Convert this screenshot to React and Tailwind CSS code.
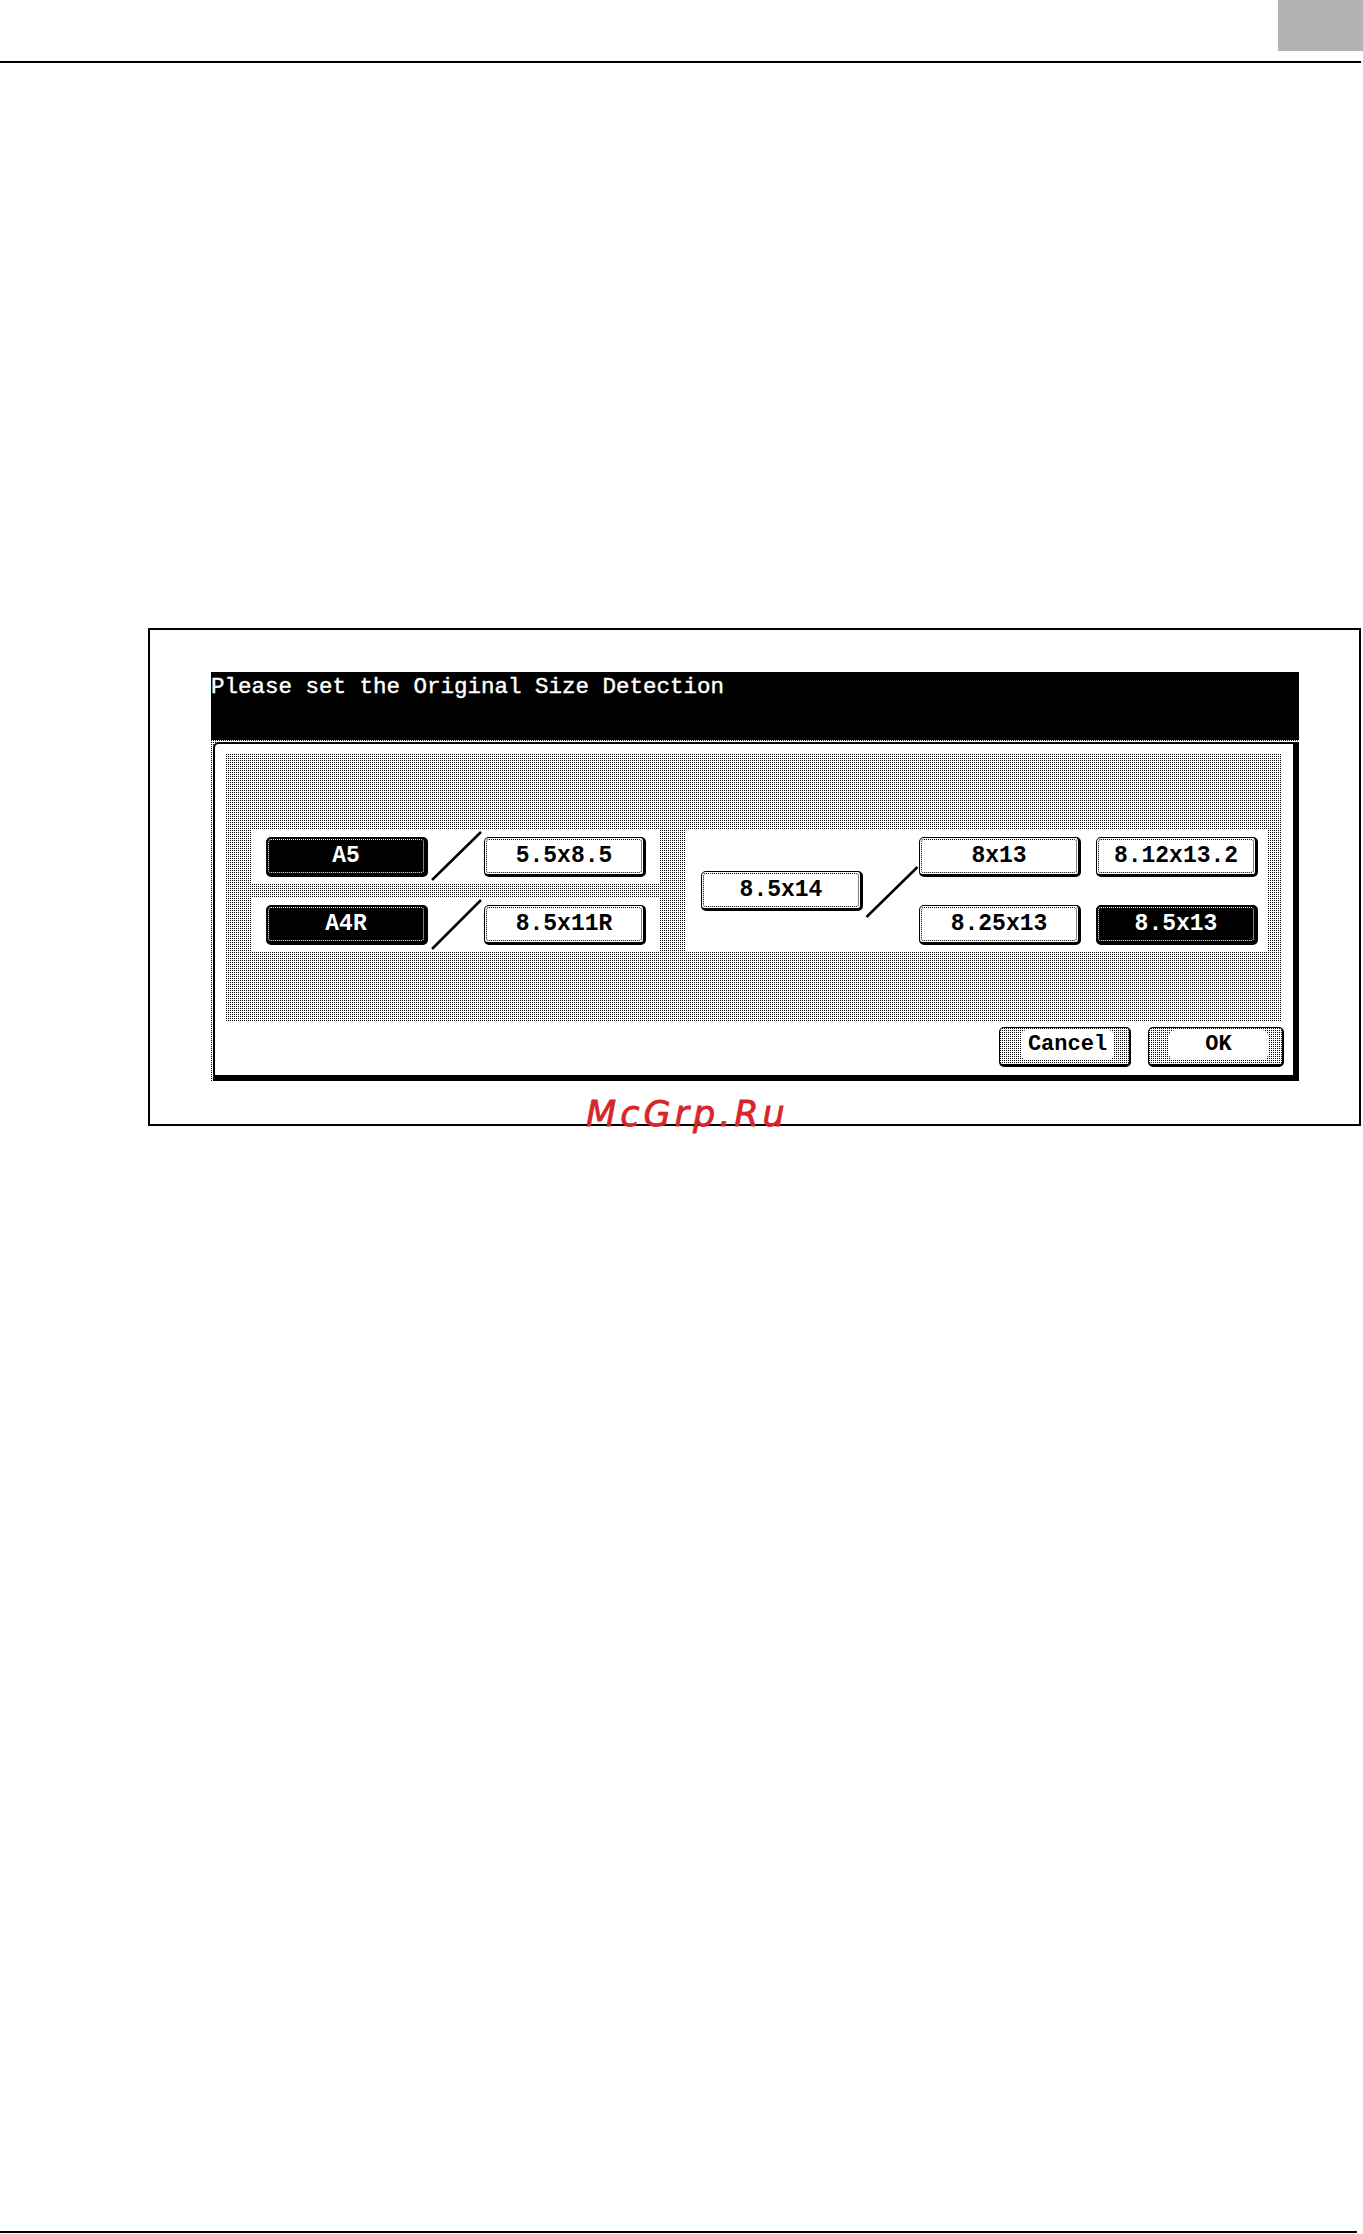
// Copier panel: original size detection dialog
const mono = "font-['Liberation_Mono','DejaVu_Sans_Mono',monospace]";
// stipple: one dark pixel in every 2x2 cell
const dots =
  'bg-[linear-gradient(90deg,transparent_1px,#fff_1px),linear-gradient(#000_1px,#fff_1px)] bg-[length:2px_2px]';

const Key = ({ label, dark = false }) => (
  <div
    className={`w-[162px] h-[40px] shrink-0 rounded-[5px] border border-black border-r-[3px] border-b-[3px] p-[1px] ${
      dark ? 'bg-black' : 'bg-white'
    }`}
  >
    <div
      className={`h-full rounded-[3px] border border-dotted flex items-center justify-center ${mono} font-bold text-[23px] leading-none ${
        dark ? 'bg-black border-white text-white' : 'bg-white border-black text-black'
      }`}
    >
      {label}
    </div>
  </div>
);

// big confirm buttons with the stippled frame round a white face
const ActionKey = ({ label, className }) => (
  <div
    className={`h-[40px] rounded-[5px] border border-black border-r-[2px] border-b-[3px] pt-[2px] pb-[4px] flex ${dots} ${className}`}
  >
    <div className={`flex-1 rounded-[6px] bg-white flex items-center justify-center ${mono} font-bold text-[22px] leading-none text-black`}>
      {label}
    </div>
  </div>
);

const Slash = ({ w, h, x1, y1, x2, y2 }) => (
  <svg width={w} height={h} className="shrink-0">
    <line x1={x1} y1={y1} x2={x2} y2={y2} stroke="#000" strokeWidth="2.5" />
  </svg>
);

export default function App() {
  return (
    <div className="relative w-[1363px] h-[2234px] bg-white flex flex-col overflow-hidden">
      {/* tab marker and header rule */}
      <div className="flex justify-end">
        <div className="w-[85px] h-[51px] bg-[#b3b3b3]" />
      </div>
      <div className="mt-[10px] h-[2px] w-[1361px] bg-black" />

      {/* screen capture frame */}
      <div className="mt-[565px] ml-[148px] w-[1213px] h-[498px] border-2 border-black">
        <div className="ml-[61px] mt-[42px] w-[1088px]">
          <div
            className={`h-[68px] bg-black text-white ${mono} text-[22.5px] leading-[26px] pt-[2px] whitespace-pre [-webkit-text-stroke:0.4px_#fff]`}
          >
            Please set the Original Size Detection
          </div>

          <div className={`h-[341px] flex pt-[2px] pl-[2px] ${dots}`}>
            <div className="flex-1 flex flex-col bg-white border-l-2 border-t-2 border-r-[6px] border-b-[6px] border-black rounded-tl-[6px] pl-[11px] pr-[11px] pt-[10px]">
              <div className={`h-[268px] pt-[75px] pl-[25px] flex items-start gap-[26px] ${dots}`}>
                {/* metric / inch pairs */}
                <div className="w-[408px] flex flex-col gap-[15px]">
                  <div className="h-[54px] bg-white flex items-start pl-[15px]">
                    <div className="mt-[8px]">
                      <Key label="A5" dark />
                    </div>
                    <Slash w={56} h={54} x1={4} y1={51} x2={53} y2={3} />
                    <div className="mt-[8px]">
                      <Key label="5.5x8.5" />
                    </div>
                  </div>
                  <div className="h-[53px] bg-white flex items-start pl-[15px]">
                    <div className="mt-[7px]">
                      <Key label="A4R" dark />
                    </div>
                    <Slash w={56} h={53} x1={4} y1={51} x2={53} y2={2} />
                    <div className="mt-[7px]">
                      <Key label="8.5x11R" />
                    </div>
                  </div>
                </div>

                {/* legal size variants */}
                <div className="w-[583px] h-[122px] bg-white flex items-start pl-[16px]">
                  <div className="mt-[42px]">
                    <Key label="8.5x14" />
                  </div>
                  <Slash w={56} h={122} x1={3.5} y1={88} x2={54.5} y2={38} />
                  <div className="mt-[8px] grid grid-cols-2 gap-x-[15px] gap-y-[28px]">
                    <Key label="8x13" />
                    <Key label="8.12x13.2" />
                    <Key label="8.25x13" />
                    <Key label="8.5x13" dark />
                  </div>
                </div>
              </div>

              <div className="mt-[5px] flex justify-end gap-[17px] -mr-[2px]">
                <ActionKey label="Cancel" className="w-[132px] pl-[21px] pr-[15px]" />
                <ActionKey label="OK" className="w-[136px] pl-[20px] pr-[14px]" />
              </div>
            </div>
          </div>
        </div>
      </div>

      <div className="mt-auto mb-[1px] h-[2px] w-[1357px] bg-black" />

      {/* site stamp over the frame edge */}
      <div className="absolute left-[586px] top-[1097px] text-[35px] leading-none italic tracking-[4px] text-[#d7262b] [-webkit-text-stroke:0.8px_#d7262b] font-['DejaVu_Sans',sans-serif]">
        McGrp.Ru
      </div>
    </div>
  );
}
